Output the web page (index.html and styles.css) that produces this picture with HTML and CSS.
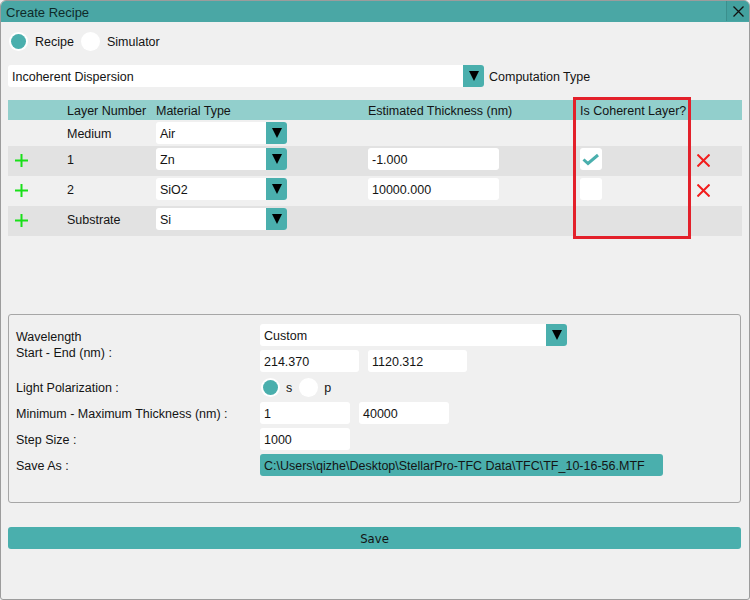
FILE: index.html
```html
<!DOCTYPE html>
<html>
<head>
<meta charset="utf-8">
<title>Create Recipe</title>
<link rel="stylesheet" href="styles.css">
</head>
<body>
<div class="window">
  <div class="titlebar">
    <span class="title">Create Recipe</span>
    <div class="close">
      <svg width="11" height="11" viewBox="0 0 11 11"><path d="M0.5 0.5 L10.5 10.5 M10.5 0.5 L0.5 10.5" stroke="#111" stroke-width="1.3" fill="none"/></svg>
    </div>
  </div>
  <div class="content">
    <div class="mode-row">
      <span class="radio on"></span><span class="radio-label">Recipe</span>
      <span class="radio"></span><span class="radio-label">Simulator</span>
    </div>
    <div class="comp-row">
      <div class="select wide"><span class="val">Incoherent Dispersion</span><span class="btn"><i class="tri"></i></span></div>
      <span class="comp-label">Computation Type</span>
    </div>

    <div class="table">
      <div class="trow head">
        <span></span><span>Layer Number</span><span>Material Type</span><span>Estimated Thickness (nm)</span><span>Is Coherent Layer?</span><span></span>
      </div>
      <div class="trow medium">
        <span></span><span class="txt">Medium</span>
        <div class="select mat"><span class="val">Air</span><span class="btn"><i class="tri"></i></span></div>
        <span></span><span></span><span></span>
      </div>
      <div class="trow alt">
        <span class="plus"><svg width="13" height="13" viewBox="0 0 13 13"><path d="M6.5 0 V13 M0 6.5 H13" stroke="#19e019" stroke-width="2" fill="none"/></svg></span>
        <span class="txt">1</span>
        <div class="select mat"><span class="val">Zn</span><span class="btn"><i class="tri"></i></span></div>
        <div class="input thick">-1.000</div>
        <div class="check"><svg width="22" height="22" viewBox="0 0 22 22"><path d="M3.5 11.5 L8 15.5 L18 7" stroke="#4aafad" stroke-width="3" fill="none"/></svg></div>
        <span class="del"><svg width="13" height="13" viewBox="0 0 13 13"><path d="M0.5 0.5 L12.5 12.5 M12.5 0.5 L0.5 12.5" stroke="#f21c1c" stroke-width="2" fill="none"/></svg></span>
      </div>
      <div class="trow">
        <span class="plus"><svg width="13" height="13" viewBox="0 0 13 13"><path d="M6.5 0 V13 M0 6.5 H13" stroke="#19e019" stroke-width="2" fill="none"/></svg></span>
        <span class="txt">2</span>
        <div class="select mat"><span class="val">SiO2</span><span class="btn"><i class="tri"></i></span></div>
        <div class="input thick">10000.000</div>
        <div class="check"></div>
        <span class="del"><svg width="13" height="13" viewBox="0 0 13 13"><path d="M0.5 0.5 L12.5 12.5 M12.5 0.5 L0.5 12.5" stroke="#f21c1c" stroke-width="2" fill="none"/></svg></span>
      </div>
      <div class="trow alt">
        <span class="plus"><svg width="13" height="13" viewBox="0 0 13 13"><path d="M6.5 0 V13 M0 6.5 H13" stroke="#19e019" stroke-width="2" fill="none"/></svg></span>
        <span class="txt">Substrate</span>
        <div class="select mat"><span class="val">Si</span><span class="btn"><i class="tri"></i></span></div>
        <span></span><span></span><span></span>
      </div>
      <div class="highlight"></div>
    </div>

    <div class="panel">
      <div class="pgrid">
        <div class="plabel two">Wavelength<br>Start - End (nm) :</div>
        <div class="select custom"><span class="val">Custom</span><span class="btn"><i class="tri"></i></span></div>
        <div class="pair"><div class="input w99">214.370</div><div class="input w99">1120.312</div></div>

        <div class="plabel">Light Polarization :</div>
        <div class="pol">
          <span class="radio on"></span><span class="pol-label">s</span>
          <span class="radio"></span><span class="pol-label">p</span>
        </div>

        <div class="plabel">Minimum - Maximum Thickness (nm) :</div>
        <div class="pair"><div class="input w89">1</div><div class="input w89">40000</div></div>

        <div class="plabel">Step Size :</div>
        <div class="pair"><div class="input w89">1000</div></div>

        <div class="plabel">Save As :</div>
        <div class="pair"><div class="path">C:\Users\qizhe\Desktop\StellarPro-TFC Data\TFC\TF_10-16-56.MTF</div></div>
      </div>
    </div>

    <div class="save">Save</div>
  </div>
</div>
</body>
</html>
```
FILE: styles.css
```css
* { box-sizing: border-box; }
html, body { margin: 0; padding: 0; }
body {
  font-family: "Liberation Sans", Arial, sans-serif;
  font-size: 12.5px;
  color: #141414;
  background: #f0f0f0;
}
.window {
  width: 750px;
  height: 600px;
  border: 1px solid #9c9c9c;
  border-radius: 6px 6px 3px 3px;
  overflow: hidden;
  background: #f0f0f0;
  display: flex;
  flex-direction: column;
}
.titlebar {
  height: 21px;
  background: #4aa7a5;
  display: flex;
  align-items: stretch;
  border-bottom: 1px solid #4aa7a5;
}
.title {
  padding-left: 5px;
  padding-top: 2px;
  line-height: 19px;
  font-size: 13px;
  color: #0e2b2a;
}
.close {
  margin-left: auto;
  width: 23px;
  border-left: 1px solid #3b8f8d;
  background: #43a19f;
  display: flex;
  align-items: center;
  justify-content: center;
}
.content {
  padding: 0 7px;
  display: flex;
  flex-direction: column;
}
.mode-row {
  margin-top: 10px;
  height: 19px;
  display: flex;
  align-items: center;
}
.radio {
  width: 19px;
  height: 19px;
  border-radius: 50%;
  background: #fff;
  display: flex;
  align-items: center;
  justify-content: center;
  flex: none;
}
.radio.on::after {
  content: "";
  width: 15px;
  height: 15px;
  border-radius: 50%;
  background: #4aafad;
}
.mode-row .radio:first-child { margin-left: 1px; }
.radio-label { margin: 0 7px 0 7px; padding-top: 1px; }
.comp-row {
  margin-top: 14px;
  display: flex;
  align-items: center;
  height: 22px;
}
.comp-label { margin-left: 5px; padding-top: 2px; }
.select {
  display: flex;
  height: 22px;
  border-radius: 3px;
  overflow: hidden;
  background: #fff;
  flex: none;
}
.select .val {
  flex: 1;
  padding-left: 4px;
  padding-top: 2px;
  line-height: 20px;
  white-space: nowrap;
}
.select .btn {
  width: 21px;
  background: #4aafad;
  display: flex;
  align-items: center;
  justify-content: center;
}
.tri {
  width: 0;
  height: 0;
  border-left: 5px solid transparent;
  border-right: 5px solid transparent;
  border-top: 10px solid #000;
}
.select.wide { width: 476px; }
.select.mat { width: 131px; }
.select.custom { width: 307px; }

.table {
  margin-top: 13px;
  width: 734px;
  position: relative;
}
.trow {
  display: grid;
  grid-template-columns: 59px 89px 212px 212px 117px 45px;
  height: 30px;
  align-items: start;
  padding-top: 2px;
}
.trow.alt { background: #e2e2e2; }
.trow.head {
  height: 20px;
  padding-top: 2px;
  background: #92cfcc;
  align-items: center;
  line-height: 18px;
}
.trow.medium { height: 26px; }
.txt { line-height: 20px; padding-top: 2px; }
.plus {
  padding-left: 7px;
  height: 22px;
  display: flex;
  align-items: center;
  padding-top: 2px;
}
.del {
  height: 22px;
  display: flex;
  align-items: center;
  padding-top: 2px;
}
.input {
  height: 22px;
  background: #fff;
  border-radius: 3px;
  padding-left: 4px;
  padding-top: 2px;
  line-height: 20px;
  white-space: nowrap;
}
.input.thick { width: 131px; }
.check {
  width: 22px;
  height: 22px;
  background: #fff;
  border-radius: 3px;
}
.check svg { display: block; }
.highlight {
  position: absolute;
  left: 565px;
  top: -3px;
  width: 118px;
  height: 142px;
  border: 3px solid #e3202a;
}

.panel {
  margin-top: 78px;
  width: 733px;
  height: 189px;
  border: 1px solid #a6a6a6;
  border-radius: 3px;
  padding: 9px 7px 0 7px;
}
.pgrid {
  display: grid;
  grid-template-columns: 244px 1fr;
  grid-auto-rows: 22px;
  row-gap: 4px;
}
.plabel {
  line-height: 20px;
  padding-top: 2px;
  white-space: nowrap;
}
.plabel.two {
  grid-row: span 2;
  line-height: 16px;
  padding-top: 5px;
}
.pair {
  display: flex;
  gap: 9px;
}
.input.w99 { width: 99px; }
.input.w89 { width: 90px; }
.pol {
  display: flex;
  align-items: center;
}
.pol .radio:first-child { margin-left: 1px; }
.pol-label { margin: 0 7px 0 6px; padding-top: 1px; }
.path {
  width: 403px;
  height: 22px;
  padding-top: 2px;
  line-height: 20px;
  background: #4aafad;
  border-radius: 3px;
  padding-left: 4px;
  white-space: nowrap;
}
.save {
  margin-top: 24px;
  width: 733px;
  height: 22px;
  padding-top: 2px;
  line-height: 20px;
  background: #4aafad;
  border-radius: 3px;
  text-align: center;
  font-size: 13px;
  font-family: "Liberation Sans Narrow", "DejaVu Sans Condensed", "Liberation Sans", sans-serif;
  font-stretch: condensed;
}
```
